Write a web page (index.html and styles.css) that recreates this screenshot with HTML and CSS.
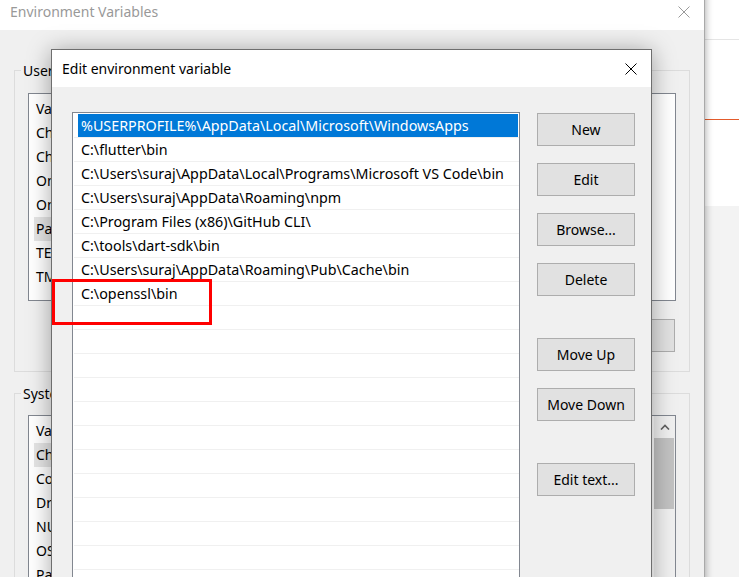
FILE: index.html
```html
<!DOCTYPE html>
<html lang="en">
<head>
    <meta charset="UTF-8">
    <meta name="viewport" content="width=device-width, initial-scale=1.0">
    <title>Edit environment variable</title>
    <link rel="stylesheet" href="styles.css">
</head>
<body>
    <!-- app window peeking out behind the dialogs -->
    <div class="desktop">
        <div class="desk-head"></div>
        <div class="desk-band"></div>
        <div class="desk-panel"></div>
        <div class="desk-rest"></div>
    </div>

    <div class="window env-window">
        <div class="titlebar">
            <span class="title">Environment Variables</span>
            <svg class="close" width="12" height="12" viewBox="0 0 12 12"><path d="M0.5 0.5L11.5 11.5M11.5 0.5L0.5 11.5" stroke="#9a9a9a" stroke-width="1"/></svg>
        </div>
        <div class="env-body">
            <div class="group">
                <div class="legend">User variables for suraj</div>
                <div class="listview">
                    <div class="lv-head"><span class="col-var">Variable</span></div>
                    <div class="lv-row"><span class="col-var">ChocolateyLastPathUpdate</span></div>
                    <div class="lv-row"><span class="col-var">ChocolateyToolsLocation</span></div>
                    <div class="lv-row"><span class="col-var">OneDrive</span></div>
                    <div class="lv-row"><span class="col-var">OneDriveConsumer</span></div>
                    <div class="lv-row selected"><span class="col-var">Path</span></div>
                    <div class="lv-row"><span class="col-var">TEMP</span></div>
                    <div class="lv-row"><span class="col-var">TMP</span></div>
                </div>
                <div class="group-buttons">
                    <button>New...</button>
                    <button>Edit...</button>
                    <button>Delete</button>
                </div>
            </div>

            <div class="group system">
                <div class="legend">System variables</div>
                <div class="listview sys-list">
                    <div class="lv-main">
                        <div class="lv-head"><span class="col-var">Variable</span></div>
                        <div class="lv-row selected"><span class="col-var">ChocolateyInstall</span></div>
                        <div class="lv-row"><span class="col-var">ComSpec</span></div>
                        <div class="lv-row"><span class="col-var">DriverData</span></div>
                        <div class="lv-row"><span class="col-var">NUMBER_OF_PROCESSORS</span></div>
                        <div class="lv-row"><span class="col-var">OS</span></div>
                        <div class="lv-row"><span class="col-var">Path</span></div>
                    </div>
                    <div class="scrollbar">
                        <div class="scroll-up">
                            <svg width="10" height="6" viewBox="0 0 10 6"><path d="M1 5.5L5 1.5L9 5.5" stroke="#606060" stroke-width="1.6" fill="none"/></svg>
                        </div>
                        <div class="scroll-thumb"></div>
                    </div>
                </div>
            </div>
        </div>
    </div>

    <div class="window dialog">
        <div class="titlebar">
            <span class="title">Edit environment variable</span>
            <svg class="close" width="12" height="12" viewBox="0 0 12 12"><path d="M0.5 0.5L11.5 11.5M11.5 0.5L0.5 11.5" stroke="#000" stroke-width="1"/></svg>
        </div>
        <div class="dialog-body">
            <div class="pathlist">
                <div class="path-row selected"><span>%USERPROFILE%\AppData\Local\Microsoft\WindowsApps</span></div>
                <div class="path-row"><span>C:\flutter\bin</span></div>
                <div class="path-row"><span>C:\Users\suraj\AppData\Local\Programs\Microsoft VS Code\bin</span></div>
                <div class="path-row"><span>C:\Users\suraj\AppData\Roaming\npm</span></div>
                <div class="path-row"><span>C:\Program Files (x86)\GitHub CLI\</span></div>
                <div class="path-row"><span>C:\tools\dart-sdk\bin</span></div>
                <div class="path-row"><span>C:\Users\suraj\AppData\Roaming\Pub\Cache\bin</span></div>
                <div class="path-row"><span>C:\openssl\bin</span></div>
                <div class="path-row"><span></span></div>
                <div class="path-row"><span></span></div>
                <div class="path-row"><span></span></div>
                <div class="path-row"><span></span></div>
                <div class="path-row"><span></span></div>
                <div class="path-row"><span></span></div>
                <div class="path-row"><span></span></div>
                <div class="path-row"><span></span></div>
                <div class="path-row"><span></span></div>
                <div class="path-row"><span></span></div>
                <div class="path-row"><span></span></div>
                <div class="path-row"><span></span></div>
            </div>
            <div class="side-buttons">
                <button>New</button>
                <button>Edit</button>
                <button>Browse...</button>
                <button>Delete</button>
                <button class="spaced">Move Up</button>
                <button>Move Down</button>
                <button class="spaced">Edit text...</button>
            </div>
        </div>
    </div>

    <!-- red highlight drawn on the screenshot -->
    <div class="annotation"></div>
</body>
</html>
```

FILE: styles.css
```css
html, body {
    margin: 0;
    height: 577px;
    overflow: hidden;
}
body {
    position: relative;
    font-family: "Noto Sans", "Open Sans", sans-serif;
    font-size: 14px;
    color: #000;
    background-color: #f3f3f3;
}
button {
    font-family: inherit;
    font-size: 14px;
    color: #000;
    width: 98px;
    height: 33px;
    padding: 0;
    background-color: #e1e1e1;
    border: 1px solid #adadad;
}

/* background app */
.desktop {
    display: flex;
    flex-direction: column;
    height: 577px;
}
.desk-head {
    height: 39px;
    background-color: #fff;
    border-bottom: 1px solid #e5e5e5;
}
.desk-band {
    height: 79px;
    background-color: #fff;
    border-bottom: 1px solid #e35b2c;
}
.desk-panel {
    height: 86px;
    background-color: #fff;
}
.desk-rest {
    flex: 1;
    background-color: #f3f3f3;
}

/* windows */
.window {
    position: absolute;
    box-sizing: border-box;
    background-color: #f0f0f0;
}
.titlebar {
    display: flex;
    align-items: center;
    justify-content: space-between;
    height: 37px;
    padding: 0 14px 0 10px;
    background-color: #fff;
}
.title {
    font-size: 14px;
}
.close {
    display: block;
}

.env-window {
    left: -1px;
    top: -8px;
    width: 706px;
    height: 620px;
    border: 1px solid #a9a9a9;
    box-shadow: 1px 0 7px rgba(0, 0, 0, 0.3);
}
.env-window .title {
    color: #999;
}
.env-body {
    padding: 40px 14px 0;
}
.group {
    border: 1px solid #dcdcdc;
    padding: 0 13px 19px;
}
.group.system {
    margin-top: 21px;
}
.legend {
    width: fit-content;
    margin: -10px 0 0 -7px;
    padding: 0 2px;
    line-height: 19px;
    background-color: #f0f0f0;
}
.listview {
    margin-top: 13px;
    height: 206px;
    border: 1px solid #828790;
    background-color: #fff;
    overflow: hidden;
}
.lv-head {
    height: 27px;
    line-height: 30px;
    padding-left: 7px;
    white-space: nowrap;
}
.lv-row {
    height: 24px;
    line-height: 24px;
    margin-left: 5px;
    white-space: nowrap;
}
.lv-row .col-var {
    padding-left: 2px;
}
.lv-row.selected .col-var {
    background-color: #e5e5e5;
}
.col-var {
    display: inline-block;
    width: 200px;
}
.group-buttons {
    display: flex;
    justify-content: flex-end;
    gap: 8px;
    margin-top: 18px;
    margin-right: 1px;
}
.sys-list {
    display: flex;
    height: 200px;
    margin-top: 12px;
}
.lv-main {
    flex: 1;
    overflow: hidden;
}
.scrollbar {
    width: 21px;
    background-color: #f0f0f0;
}
.scroll-up {
    display: flex;
    justify-content: center;
    align-items: center;
    height: 22px;
}
.scroll-thumb {
    height: 71px;
    margin-right: 1px;
    background-color: #c2c2c2;
}

/* front dialog */
.dialog {
    left: 51px;
    top: 49px;
    width: 601px;
    height: 580px;
    border: 1px solid #6e6e6e;
    box-shadow: 0 2px 22px rgba(0, 0, 0, 0.35);
}
.dialog-body {
    display: flex;
    gap: 17px;
    padding: 25px 16px 0 20px;
}
.pathlist {
    flex: none;
    box-sizing: border-box;
    width: 448px;
    height: 500px;
    padding-top: 1px;
    border: 1px solid #828790;
    background-color: #fff;
    overflow: hidden;
}
.path-row {
    height: 24px;
    box-sizing: border-box;
    margin-left: 1px;
    padding: 0 1px 0 4px;
    border-bottom: 1px solid #f0f0f0;
}
.path-row span {
    display: block;
    height: 23px;
    line-height: 23px;
    padding-left: 3px;
    font-size: 14.3px;
    white-space: nowrap;
}
.path-row.selected span {
    background-color: #0078d7;
    color: #fff;
}
.side-buttons {
    display: flex;
    flex-direction: column;
    gap: 17px;
    margin-top: 1px;
}
.side-buttons .spaced {
    margin-top: 25px;
}

.annotation {
    position: absolute;
    left: 52px;
    top: 279px;
    width: 160px;
    height: 46px;
    box-sizing: border-box;
    border: 3px solid #f00;
}
```
